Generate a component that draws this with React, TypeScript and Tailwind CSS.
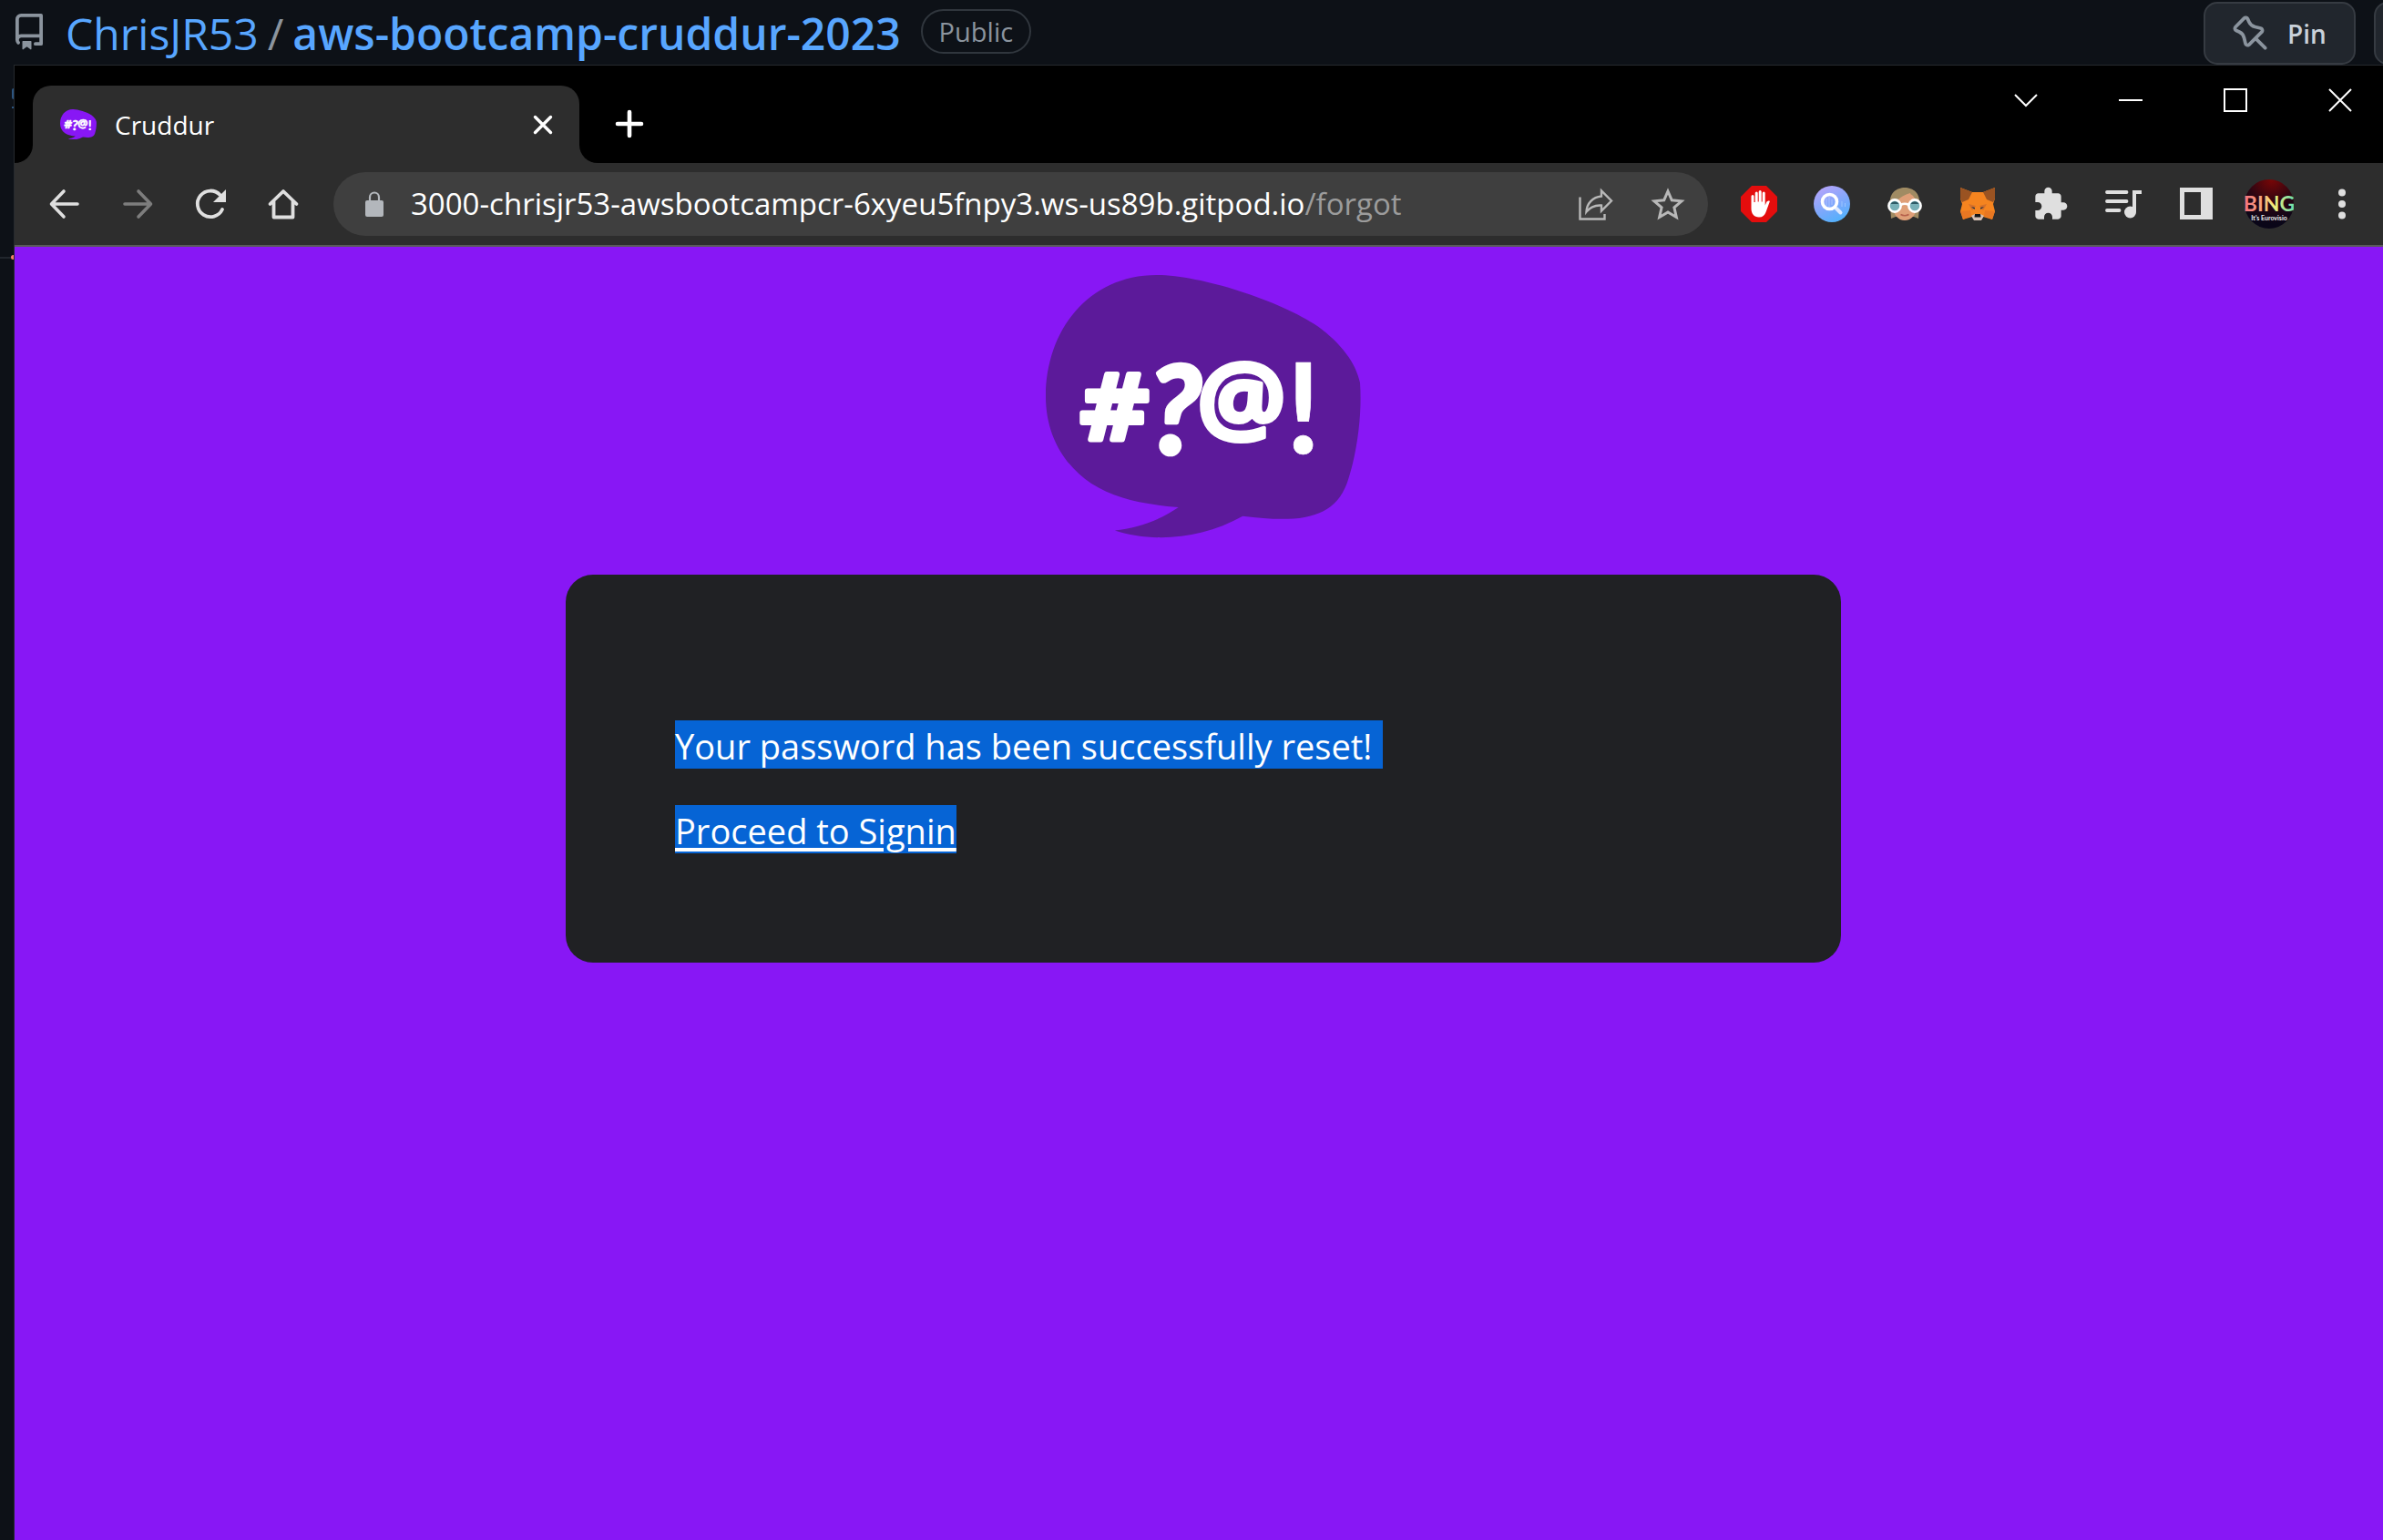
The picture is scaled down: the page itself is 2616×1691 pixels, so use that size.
import React from "react";

type IconProps = { className?: string };

function CruddurMark({ className, fill }: { className: string; fill: string }) {
  return (
    <svg viewBox="91 66 1035 863" className={className} role="img" aria-label="Cruddur">
      <path
        fill={fill}
        d="M91 465C91 250 230 66 455 66C600 66 860 150 985 235C1060 290 1110 355 1123 420C1130 520 1115 650 1080 750C1035 870 920 880 738 858C600 935 440 945 318 905C390 897 460 875 527 829C400 817 320 800 240 750C150 690 91 590 91 465Z"
      />
      <g fill="#fff" stroke="#fff" strokeLinejoin="round" textAnchor="middle" fontWeight="700">
        <text x="317" y="608" fontSize="300" strokeWidth="18" fontFamily="'DejaVu Sans', sans-serif">#</text>
        <text x="516" y="652" fontSize="400" strokeWidth="14" fontStyle="italic" fontFamily="Lato, sans-serif">?</text>
        <text x="734" y="586" fontSize="328" strokeWidth="12" fontFamily="'Open Sans', sans-serif">@</text>
        <text x="937" y="652" fontSize="410" strokeWidth="2" fontFamily="Lato, sans-serif" fontStyle="normal">!</text>
      </g>
    </svg>
  );
}

function RepoIcon({ className }: IconProps) {
  return (
    <svg viewBox="0 0 16 16" className={className} fill="currentColor" fillRule="evenodd" aria-hidden="true">
      <path d="M2 2.5A2.5 2.5 0 014.5 0h8.75a.75.75 0 01.75.75v12.5a.75.75 0 01-.75.75h-2.5a.75.75 0 110-1.5h1.75v-2h-8a1 1 0 00-.714 1.7.75.75 0 01-1.072 1.05A2.495 2.495 0 012 11.5v-9zm10.5-1V9h-8c-.356 0-.694.074-1 .208V2.5a1 1 0 011-1h8zM5 12.25v3.25a.25.25 0 00.4.2l1.45-1.087a.25.25 0 01.3 0L8.6 15.7a.25.25 0 00.4-.2v-3.25a.25.25 0 00-.25-.25h-3.5a.25.25 0 00-.25.25z" />
    </svg>
  );
}

function PinIcon({ className }: IconProps) {
  return (
    <svg viewBox="0 0 16 16" className={className} fill="currentColor" fillRule="evenodd" aria-hidden="true">
      <path d="M4.456.734a1.75 1.75 0 012.826.504l.613 1.327a3.081 3.081 0 002.084 1.707l2.454.584c1.332.317 1.8 1.972.832 2.94L11.06 10l3.72 3.72a.75.75 0 11-1.061 1.06L10 11.06l-2.204 2.205c-.968.968-2.623.5-2.94-.832l-.584-2.454a3.081 3.081 0 00-1.707-2.084l-1.327-.613a1.75 1.75 0 01-.504-2.826L4.456.734zM5.92 1.866a.25.25 0 00-.404-.072L1.794 5.516a.25.25 0 00.072.404l1.328.613A4.582 4.582 0 015.73 9.63l.584 2.454a.25.25 0 00.42.12l5.47-5.47a.25.25 0 00-.12-.42L9.63 5.73a4.581 4.581 0 01-3.098-2.537L5.92 1.866z" />
    </svg>
  );
}

/* Toolbar glyphs share a 40-unit grid. */
function Glyph({ children }: { children: React.ReactNode }) {
  return (
    <svg viewBox="0 0 40 40" className="size-10 shrink-0" fill="none" aria-hidden="true">
      {children}
    </svg>
  );
}

function BackGlyph() {
  return (
    <Glyph>
      <path d="M34 20H6M19 6L5.500 20L19 34" stroke="#dfdfdf" strokeWidth="3.600" strokeLinecap="round" strokeLinejoin="round" />
    </Glyph>
  );
}

function ForwardGlyph() {
  return (
    <Glyph>
      <path d="M6 20H34M21 6L34.500 20L21 34" stroke="#7d7d7d" strokeWidth="3.600" strokeLinecap="round" strokeLinejoin="round" />
    </Glyph>
  );
}

function ReloadGlyph() {
  return (
    <Glyph>
      <path d="M33 26A14.300 14.300 0 1 1 30.500 10" stroke="#dfdfdf" strokeWidth="3.800" strokeLinecap="round" />
      <path d="M37 4V18H23Z" fill="#dfdfdf" />
    </Glyph>
  );
}

function HomeGlyph() {
  return (
    <Glyph>
      <path d="M5.500 20L20 6L34.500 20M9.500 17.500V34.500H30.500V17.500" stroke="#dfdfdf" strokeWidth="3.800" strokeLinecap="round" strokeLinejoin="round" />
    </Glyph>
  );
}

function ShareGlyph() {
  return (
    <Glyph>
      <path d="M3.500 12.500V36.500H30.500V31" stroke="#b8b8b8" strokeWidth="2.400" />
      <path
        d="M10.500 28.500C11 19 17.500 12.500 27 11.500V5.500L38 16.500L27 27.500V21.500C20 21 14.500 23.500 10.500 28.500Z"
        stroke="#b8b8b8"
        strokeWidth="2.400"
      />
    </Glyph>
  );
}

function StarGlyph() {
  return (
    <Glyph>
      <path
        d="M20 6L24.300 15.800L35 16.800L26.900 23.900L29.300 34.500L20 28.900L10.700 34.500L13.100 23.900L5 16.800L15.700 15.800Z"
        stroke="#b8b8b8"
        strokeWidth="3"
      />
    </Glyph>
  );
}

function BlockerGlyph() {
  return (
    <Glyph>
      <path d="M12 0H28L40 12V28L28 40H12L0 28V12Z" fill="#e40d0d" />
      <path
        d="M11.500 22V11.500a1.500 1.500 0 0 1 3 0V18h1.200V8a1.500 1.500 0 0 1 3 0v9.500h1V6.500a1.500 1.500 0 0 1 3 0v11h1V8a1.500 1.500 0 0 1 3 0v13.500l1.500-3.500c.800-1.800 4-2 3.600-.700L27.500 29c-1.200 3.500-3.500 5.500-7.500 5.500-5.500 0-8.500-4-8.500-9.500Z"
        fill="#fff"
      />
    </Glyph>
  );
}

function SearchOrbGlyph() {
  return (
    <Glyph>
      <defs>
        <linearGradient id="orb" x1="0.2" y1="0" x2="0.7" y2="1">
          <stop offset="0" stopColor="#b8a4fb" />
          <stop offset="0.6" stopColor="#7aa8fb" />
          <stop offset="1" stopColor="#4fb2fc" />
        </linearGradient>
      </defs>
      <circle cx="20" cy="20" r="20" fill="url(#orb)" />
      <path d="M14 14v8M17 12v12M20 15v6" stroke="#a9c3ff" strokeWidth="1" />
      <path d="M25 25L29.500 29.500" stroke="#dce8ff" strokeWidth="4" strokeLinecap="round" />
      <circle cx="17.500" cy="17.500" r="8" stroke="#fff" strokeWidth="3.600" />
      <path d="M31 17v6M34.500 19v4" stroke="#9cc4fd" strokeWidth="1" />
    </Glyph>
  );
}

function GlassesGlyph() {
  return (
    <Glyph>
      <path d="M4 22C2 8 11 2 20 2S38 8 36 22L35 36L30 34H10L5 36Z" fill="#a08b63" />
      <path d="M7 20C8 14 12 15 20 13C27 9 27 9 28 9C31 13 33 16 33 22C33 32 27 38 20 38S7 32 7 22Z" fill="#df9f78" />
      <path d="M8 18C15 17 23 13 26 9C30 11 33 15 33 18L34 10L22 4L8 9Z" fill="#a08b63" />
      <path d="M10 18C15 12 20 10 26 8L29 16L20 19Z" fill="#df9f78" />
      <circle cx="9" cy="22" r="6.600" fill="#78b0b8" stroke="#fff" strokeWidth="2.600" />
      <circle cx="31" cy="22" r="6.600" fill="#78b0b8" stroke="#fff" strokeWidth="2.600" />
      <path d="M4.500 20a5 5 0 0 1 9 0Z M26.500 20a5 5 0 0 1 9 0Z" fill="#2d5a66" />
      <path d="M15.500 21Q20 18.500 24.500 21" stroke="#fff" strokeWidth="2.600" />
      <path d="M15.500 31.500Q20 34 24.500 31.500" stroke="#b5604b" strokeWidth="1.600" />
    </Glyph>
  );
}

function FoxGlyph() {
  return (
    <Glyph>
      <path d="M1 2L14 7H26L39 2V14L37 20L39 28L36 37L26 34L23 38H17L14 34L4 37L1 28L3 20L1 14Z" fill="#f5841f" />
      <path d="M1 2L14 7L10 15L3 18L1 14Z" fill="#9a5322" />
      <path d="M39 2L26 7L30 15L37 18L39 14Z" fill="#9a5322" />
      <path d="M1 28L12 27L13 33L4 37ZM39 28L28 27L27 33L36 37Z" fill="#e87722" />
      <path d="M10 20L18 22L14 27ZM30 20L22 22L26 27Z" fill="#d5702a" />
      <path d="M13 23L17 24L16.500 26ZM27 23L23 24L23.500 26Z" fill="#233447" />
      <path d="M13 33L17 31H23L27 33L24 38H16Z" fill="#d6c0b3" />
      <path d="M17 31H23L23.500 34.500H16.500Z" fill="#161616" />
    </Glyph>
  );
}

function ExtensionsGlyph() {
  return (
    <svg viewBox="0 0 24 24" className="size-10" fill="#dfdfdf" aria-hidden="true">
      <path d="M20.500 11H19V7c0-1.100-.900-2-2-2h-4V3.500C13 2.120 11.880 1 10.500 1S8 2.120 8 3.500V5H4c-1.100 0-1.990.900-1.990 2v3.800H3.500c1.490 0 2.700 1.210 2.700 2.700s-1.210 2.700-2.700 2.700H2V20c0 1.100.900 2 2 2h3.800v-1.500c0-1.490 1.210-2.700 2.700-2.700 1.490 0 2.700 1.210 2.700 2.700V22H17c1.100 0 2-.900 2-2v-4h1.500c1.380 0 2.500-1.120 2.500-2.500S21.880 11 20.500 11z" />
    </svg>
  );
}

function MediaGlyph() {
  return (
    <Glyph>
      <path d="M2 7H23.500M2 17H23.500M2 27H15.500" stroke="#dfdfdf" strokeWidth="3.800" strokeLinecap="round" />
      <path d="M30 29V5H40V9H34V29Z" fill="#dfdfdf" />
      <circle cx="27.500" cy="29" r="6.500" fill="#dfdfdf" />
    </Glyph>
  );
}

function SidePanelGlyph() {
  return (
    <Glyph>
      <path fillRule="evenodd" d="M2 2H38V37H2ZM7 7V32H25V7Z" fill="#dfdfdf" />
    </Glyph>
  );
}

function MenuGlyph() {
  return (
    <Glyph>
      <circle cx="20" cy="7.500" r="4" fill="#dfdfdf" />
      <circle cx="20" cy="20" r="4" fill="#dfdfdf" />
      <circle cx="20" cy="32.500" r="4" fill="#dfdfdf" />
    </Glyph>
  );
}

function Avatar() {
  return (
    <svg viewBox="0 0 54 54" className="size-[54px]" role="img" aria-label="Profile">
      <defs>
        <radialGradient id="glow" cx="0.55" cy="0" r="0.9">
          <stop offset="0" stopColor="#7a0606" />
          <stop offset="0.55" stopColor="#2a0512" />
          <stop offset="1" stopColor="#0a0618" />
        </radialGradient>
        <linearGradient id="neon" x1="0" x2="1">
          <stop offset="0" stopColor="#f4707f" />
          <stop offset="0.35" stopColor="#f7a57e" />
          <stop offset="0.6" stopColor="#f3f07a" />
          <stop offset="1" stopColor="#62dcb2" />
        </linearGradient>
      </defs>
      <circle cx="27" cy="27" r="27" fill="url(#glow)" />
      <text x="27" y="35" textAnchor="middle" fontFamily="Lato, sans-serif" fontWeight="700" fontSize="23" fill="url(#neon)">
        BING
      </text>
      <text x="27" y="45" textAnchor="middle" fontFamily="Lato, sans-serif" fontWeight="700" fontSize="7" fill="#eee">
        It's Eurovisio
      </text>
    </svg>
  );
}

function ToolButton({ label, children }: { label: string; children: React.ReactNode }) {
  return (
    <button type="button" aria-label={label} className="flex h-[70px] w-20 shrink-0 items-center justify-center">
      {children}
    </button>
  );
}

function WindowButton({ label, d }: { label: string; d: string }) {
  return (
    <button type="button" aria-label={label} className="flex h-[76px] w-[115px] items-center justify-center">
      <svg viewBox="0 0 26 26" className="size-[26px]" fill="none" stroke="#fff" strokeWidth="2" aria-hidden="true">
        <path d={d} />
      </svg>
    </button>
  );
}

function RepoHeader() {
  return (
    <header className="flex h-[71px] shrink-0 items-start justify-between overflow-hidden">
      <div className="flex items-start">
        <RepoIcon className="mt-[15px] ml-3 size-10 text-[#8b949e]" />
        <h1 className="ml-5 flex h-[74px] items-center text-[48px] text-[#58a6ff]">
          <a href="#owner">ChrisJR53</a>
          <span className="mx-[10px] text-[#8b949e]">/</span>
          <a href="#repo" className="font-semibold">aws-bootcamp-cruddur-2023</a>
        </h1>
        <span className="mt-[10px] ml-[22px] flex h-[49px] items-center rounded-full border-2 border-[#30363d] px-[18px] text-[29px] font-medium text-[#8b949e]">
          Public
        </span>
      </div>
      <div className="mt-[2px] -mr-10 flex gap-5">
        <button type="button" className="flex h-[69px] w-[167px] items-center rounded-[15px] border-2 border-[#363b42] bg-[#21262d] pl-[30px] text-[28px] font-semibold text-[#c9d1d9]">
          <PinIcon className="mr-5 size-10 text-[#8b949e]" />
          Pin
        </button>
        <button type="button" aria-label="More" className="h-[69px] w-[50px] rounded-[15px] border-2 border-[#363b42] bg-[#21262d]" />
      </div>
    </header>
  );
}

function TabStrip() {
  return (
    <div className="flex h-[107px] items-start justify-between bg-black">
      <div className="flex h-full items-end">
        <div className="h-[85px] w-5 bg-[#2d2d2d]">
          <div className="h-full rounded-br-[20px] bg-black" />
        </div>
        <div className="flex h-[85px] w-[600px] items-center rounded-t-[20px] bg-[#2d2d2d] pr-[26px] pl-[30px]">
          <CruddurMark className="w-10" fill="#8817f5" />
          <span className="ml-5 flex-1 text-[28px] leading-10 text-white">Cruddur</span>
          <button type="button" aria-label="Close tab" className="flex size-7 items-center justify-center">
            <svg viewBox="0 0 28 28" className="size-7" stroke="#fff" strokeWidth="3.400" strokeLinecap="round" aria-hidden="true">
              <path d="M5.500 5.500L22.500 22.500M22.500 5.500L5.500 22.500" />
            </svg>
          </button>
        </div>
        <div className="h-[85px] w-5 bg-[#2d2d2d]">
          <div className="h-full rounded-bl-[20px] bg-black" />
        </div>
        <button type="button" aria-label="New tab" className="mb-[27px] ml-[19px]">
          <svg viewBox="0 0 32 32" className="size-8" stroke="#fff" strokeWidth="4.600" strokeLinecap="round" aria-hidden="true">
            <path d="M16 3V29M3 16H29" />
          </svg>
        </button>
      </div>
      <div className="flex">
        <WindowButton label="Search tabs" d="M1 7L13 19L25 7" />
        <WindowButton label="Minimize" d="M0 13H26" />
        <WindowButton label="Maximize" d="M1 1H25V25H1Z" />
        <WindowButton label="Close" d="M1 1L25 25M25 1L1 25" />
      </div>
    </div>
  );
}

function Toolbar() {
  return (
    <div className="flex h-[92px] items-center border-b-2 border-[#5a5a5a] bg-[#2d2d2d] px-[15px]">
      <ToolButton label="Back"><BackGlyph /></ToolButton>
      <ToolButton label="Forward"><ForwardGlyph /></ToolButton>
      <ToolButton label="Reload"><ReloadGlyph /></ToolButton>
      <ToolButton label="Home"><HomeGlyph /></ToolButton>
      <div className="mr-4 ml-[15px] flex h-[70px] flex-1 items-center rounded-full bg-[#3f3f3f] pr-1 pl-[35px]">
        <svg viewBox="0 0 20 28" className="h-7 w-5" aria-hidden="true">
          <rect y="10" width="20" height="18" rx="2" fill="#b3b7bc" />
          <path d="M5 11V6.500a5 5 0 0 1 10 0V11" fill="none" stroke="#b3b7bc" strokeWidth="2.200" />
        </svg>
        <p className="ml-[30px] flex-1 text-[33px] whitespace-nowrap text-white">
          3000-chrisjr53-awsbootcampcr-6xyeu5fnpy3.ws-us89b.gitpod.io<span className="text-[#9c9c9c]">/forgot</span>
        </p>
        <ToolButton label="Share"><ShareGlyph /></ToolButton>
        <ToolButton label="Bookmark"><StarGlyph /></ToolButton>
      </div>
      <ToolButton label="Ad blocker"><BlockerGlyph /></ToolButton>
      <ToolButton label="Search helper"><SearchOrbGlyph /></ToolButton>
      <ToolButton label="Reader"><GlassesGlyph /></ToolButton>
      <ToolButton label="Wallet"><FoxGlyph /></ToolButton>
      <ToolButton label="Extensions"><ExtensionsGlyph /></ToolButton>
      <ToolButton label="Media"><MediaGlyph /></ToolButton>
      <ToolButton label="Side panel"><SidePanelGlyph /></ToolButton>
      <ToolButton label="Profile"><Avatar /></ToolButton>
      <ToolButton label="Menu"><MenuGlyph /></ToolButton>
    </div>
  );
}

function ResetPage() {
  return (
    <main className="flex flex-1 flex-col items-center bg-[#8817f5] pt-[31px]">
      <CruddurMark className="w-[346px]" fill="#5c1a9a" />
      <section className="mt-10 flex w-full max-w-[1400px] flex-col items-start gap-10 rounded-[30px] bg-[#202124] px-[120px] pt-40 pb-[120px] text-[38px] leading-[49px] text-white">
        <p className="bg-[#0664d5] pt-1 pr-3">Your password has been successfully reset!</p>
        <a href="#signin" className="bg-[#0664d5] pt-1 underline decoration-4 underline-offset-4">Proceed to Signin</a>
      </section>
    </main>
  );
}

export default function App() {
  return (
    <div className="flex min-h-screen flex-col overflow-hidden bg-[#0d1117] font-['Open_Sans',sans-serif]">
      <RepoHeader />
      <div className="flex flex-1">
        <div className="flex w-[15px] shrink-0 flex-col items-end overflow-hidden pt-[26px]">
          <div className="h-3 w-[2px] rounded-l-full bg-[#2c5580]" />
          <div className="mt-2 h-[2px] w-[2px] bg-[#2c5580]" />
          <div className="mt-[161px] flex w-full items-center">
            <div className="h-[2px] flex-1 bg-[#21262d]" />
            <div className="h-[5px] w-[3px] rounded-l-full bg-[#f78166]" />
          </div>
        </div>
        <div className="-mr-[10px] flex flex-1 flex-col border-t border-l border-[#262a2e]">
          <TabStrip />
          <Toolbar />
          <ResetPage />
        </div>
      </div>
    </div>
  );
}
